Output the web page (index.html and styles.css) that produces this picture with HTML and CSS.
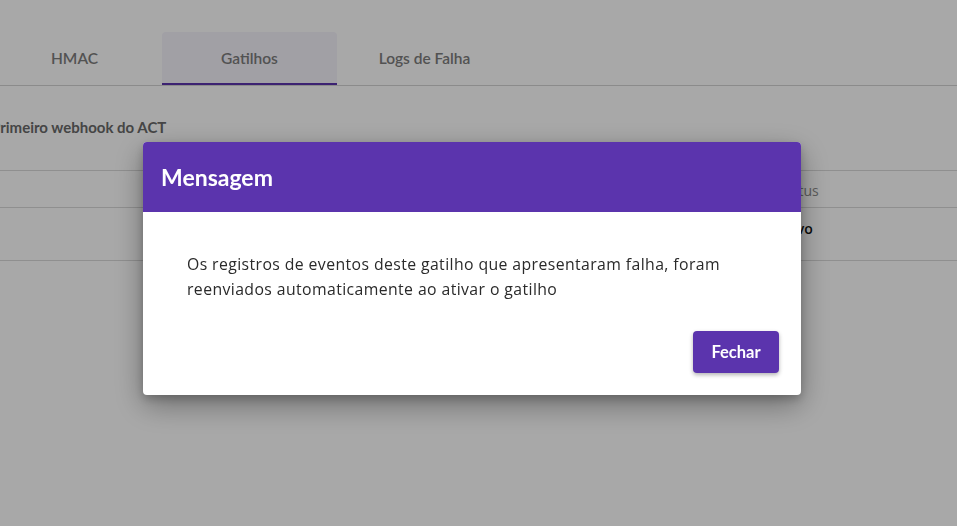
FILE: index.html
```html
<!DOCTYPE html>
<html lang="pt-BR">
<head>
<meta charset="utf-8">
<title>Gatilhos</title>
<link rel="stylesheet" href="styles.css">
</head>
<body>
<div class="page">
  <nav class="tabs">
    <div class="tab">HMAC</div>
    <div class="tab active">Gatilhos</div>
    <div class="tab">Logs de Falha</div>
  </nav>
  <h2 class="webhook-title">Primeiro webhook do ACT</h2>
  <div class="table">
    <div class="row head">
      <div class="cell name"></div>
      <div class="cell status">Status</div>
    </div>
    <div class="row body-row">
      <div class="cell name"></div>
      <div class="cell status strong">Ativo</div>
    </div>
  </div>
</div>
<div class="overlay"></div>
<div class="modal" role="dialog">
  <div class="modal-header">Mensagem</div>
  <div class="modal-body">
    <p>Os registros de eventos deste gatilho que apresentaram falha, foram reenviados automaticamente ao ativar o gatilho</p>
    <div class="actions"><button class="btn">Fechar</button></div>
  </div>
</div>
</body>
</html>
```

FILE: styles.css
```css
html, body {
  margin: 0;
  padding: 0;
  background: #ffffff;
  overflow: hidden;
  width: 957px;
  height: 526px;
}
body {
  font-family: "Lato", "Noto Sans", sans-serif;
  color: #666;
}
.page {
  width: 957px;
  height: 526px;
}
.tabs {
  display: flex;
  margin-left: -13px;
  padding-top: 32px;
  border-bottom: 1px solid #d4d4d4;
}
.tab {
  width: 175px;
  height: 53px;
  display: flex;
  align-items: center;
  justify-content: center;
  font-size: 15.5px;
  color: #7d7d7d;
  font-weight: 600;
  border-radius: 4px 4px 0 0;
  box-sizing: border-box;
  padding-bottom: 2px;
}
.tab.active {
  background: #f4f3fb;
  border-bottom: 2px solid #5b34ad;
  padding-bottom: 0;
}
.webhook-title {
  margin: 31px 0 0 -9px;
  font-size: 15px;
  font-weight: 700;
  color: #6a6a6a;
  line-height: 20px;
}
.table {
  margin-top: 33px;
  border-top: 1px solid #d9d9d9;
}
.row {
  display: flex;
  border-bottom: 1px solid #d9d9d9;
  box-sizing: border-box;
}
.row.head { height: 37px; align-items: center; }
.row.body-row { height: 53px; align-items: flex-start; padding-top: 11px; }
.cell { font-size: 14px; font-family: "Open Sans", sans-serif; line-height: 19px; }
.cell.name { width: 778px; flex: none; }
.cell.status { color: #8c8c8c; padding-top: 2px; }
.cell.status.strong { color: #111; font-weight: 600; padding-top: 0; }
.overlay {
  position: fixed;
  inset: 0;
  background: rgba(0, 0, 0, 0.34);
}
.modal {
  position: fixed;
  left: 143px;
  top: 142px;
  width: 658px;
  height: 253px;
  background: #fff;
  border-radius: 4px;
  overflow: hidden;
  box-shadow: 0 10px 30px rgba(0,0,0,0.35), 0 4px 10px rgba(0,0,0,0.2);
}
.modal-header {
  height: 70px;
  background: #5b34ad;
  color: #fff;
  font-weight: 700;
  font-size: 23px;
  display: flex;
  align-items: center;
  padding-left: 18px;
  padding-bottom: 1px;
  box-sizing: border-box;
}
.modal-body {
  padding: 40px 22px 0 44px;
}
.modal-body p {
  margin: 0;
  font-family: "Open Sans", sans-serif;
  font-size: 15.8px;
  letter-spacing: 0.4px;
  line-height: 25px;
  color: #2a2a2a;
  max-width: 540px;
}
.actions {
  display: flex;
  justify-content: flex-end;
  margin-top: 29px;
}
.btn {
  width: 86px;
  height: 42px;
  border: none;
  border-radius: 4px;
  background: #5b34ad;
  color: #fff;
  font-family: "Lato", sans-serif;
  font-weight: 700;
  font-size: 16.5px;
  box-shadow: 0 2px 4px rgba(0,0,0,0.3);
  cursor: pointer;
}
```
